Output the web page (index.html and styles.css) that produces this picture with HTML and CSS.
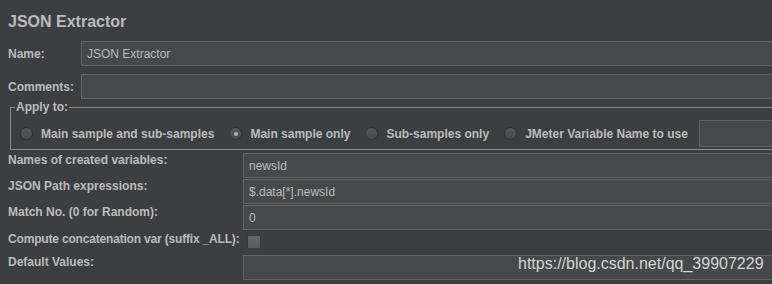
FILE: index.html
```html
<!DOCTYPE html>
<html lang="en">
<head>
    <meta charset="UTF-8">
    <title>JSON Extractor</title>
    <link rel="stylesheet" href="styles.css">
</head>
<body>

<div class="panel">
    <h1 class="title">JSON Extractor</h1>

    <div class="row">
        <label class="row-label">Name:</label>
        <input class="field" type="text" value="JSON Extractor">
    </div>
    <div class="row">
        <label class="row-label">Comments:</label>
        <input class="field" type="text" value="">
    </div>

    <fieldset class="apply">
        <legend>Apply to:</legend>
        <div class="radios">
            <span class="option"><span class="radio"></span>Main sample and sub-samples</span>
            <span class="option"><span class="radio checked"></span>Main sample only</span>
            <span class="option"><span class="radio"></span>Sub-samples only</span>
            <span class="option"><span class="radio"></span>JMeter Variable Name to use</span>
            <input class="field var-field" type="text" value="">
        </div>
    </fieldset>

    <div class="props">
        <div class="prop">
            <span class="prop-label">Names of created variables:</span>
            <input class="field" type="text" value="newsId">
        </div>
        <div class="prop">
            <span class="prop-label">JSON Path expressions:</span>
            <input class="field" type="text" value="$.data[*].newsId">
        </div>
        <div class="prop">
            <span class="prop-label">Match No. (0 for Random):</span>
            <input class="field" type="text" value="0">
        </div>
        <div class="prop check-row">
            <span class="check-label">Compute concatenation var (suffix _ALL):</span>
            <span class="checkbox"></span>
        </div>
        <div class="prop">
            <span class="prop-label">Default Values:</span>
            <input class="field" type="text" value="">
        </div>
    </div>
</div>

<div class="watermark">https://blog.csdn.net/qq_39907229</div>

</body>
</html>
```

FILE: styles.css
```css
body {
    margin: 0;
    background: #3c3f41;
    color: #bbbbbb;
    font-family: 'Liberation Sans', Arial, sans-serif;
    font-size: 12px;
    font-weight: bold;
    overflow: hidden;
    height: 284px;
    position: relative;
}
.panel {
    width: 840px;
    padding-left: 8px;
}
.title {
    margin: 0;
    padding-top: 12px;
    height: 19px;
    line-height: 19px;
    font-size: 16px;
    font-weight: bold;
}
.row {
    display: flex;
    align-items: center;
    margin-top: 10px;
}
.row + .row {
    margin-top: 8px;
}
.row-label {
    width: 73px;
    flex: none;
    line-height: 14px;
}
.field {
    flex: 1;
    height: 25px;
    box-sizing: border-box;
    margin: 0;
    padding: 0 5px;
    background: #45494a;
    border: 1px solid #646464;
    color: #bbbbbb;
    font-family: 'Liberation Sans', Arial, sans-serif;
    font-size: 12px;
    font-weight: normal;
    outline: none;
}
.apply {
    margin: 1px 0 0 2px;
    padding: 6px 0 2px 4px;
    border: 1px solid #8a8a8a;
    min-width: 0;
}
.apply legend {
    padding: 0 1px;
    line-height: 14px;
}
.radios {
    display: flex;
    align-items: center;
    margin-left: 5px;
}
.option {
    display: flex;
    align-items: center;
    gap: 8px;
    margin-right: 15px;
    line-height: 14px;
    white-space: nowrap;
}
.option:last-of-type {
    margin-right: 11px;
}
.radio {
    width: 13px;
    height: 13px;
    border-radius: 50%;
    box-sizing: border-box;
    border: 1px solid #2f3133;
    background: linear-gradient(#55595b, #46494b);
    display: flex;
    justify-content: center;
    align-items: center;
}
.radio.checked::after {
    content: "";
    width: 4px;
    height: 4px;
    border-radius: 50%;
    background: #b0b0b0;
}
.var-field {
    height: 27px;
}
.props {
    display: flex;
    flex-direction: column;
    gap: 1px;
    margin-top: 3px;
}
.prop {
    display: flex;
    align-items: flex-start;
    height: 25px;
}
.prop-label {
    width: 235px;
    flex: none;
    line-height: 14px;
}
.check-row {
    height: 23px;
}
.check-label {
    line-height: 14px;
    margin-top: 1px;
    letter-spacing: -0.18px;
}
.checkbox {
    width: 14px;
    height: 14px;
    box-sizing: border-box;
    margin: 4px 0 0 7px;
    border: 1px solid #3a3a3a;
    border-radius: 2px;
    background: linear-gradient(#676767, #5a5a5a);
}
.watermark {
    position: absolute;
    left: 518px;
    top: 255px;
    font-size: 16px;
    font-weight: normal;
    line-height: 18px;
    color: #d4d4d4;
}
```
